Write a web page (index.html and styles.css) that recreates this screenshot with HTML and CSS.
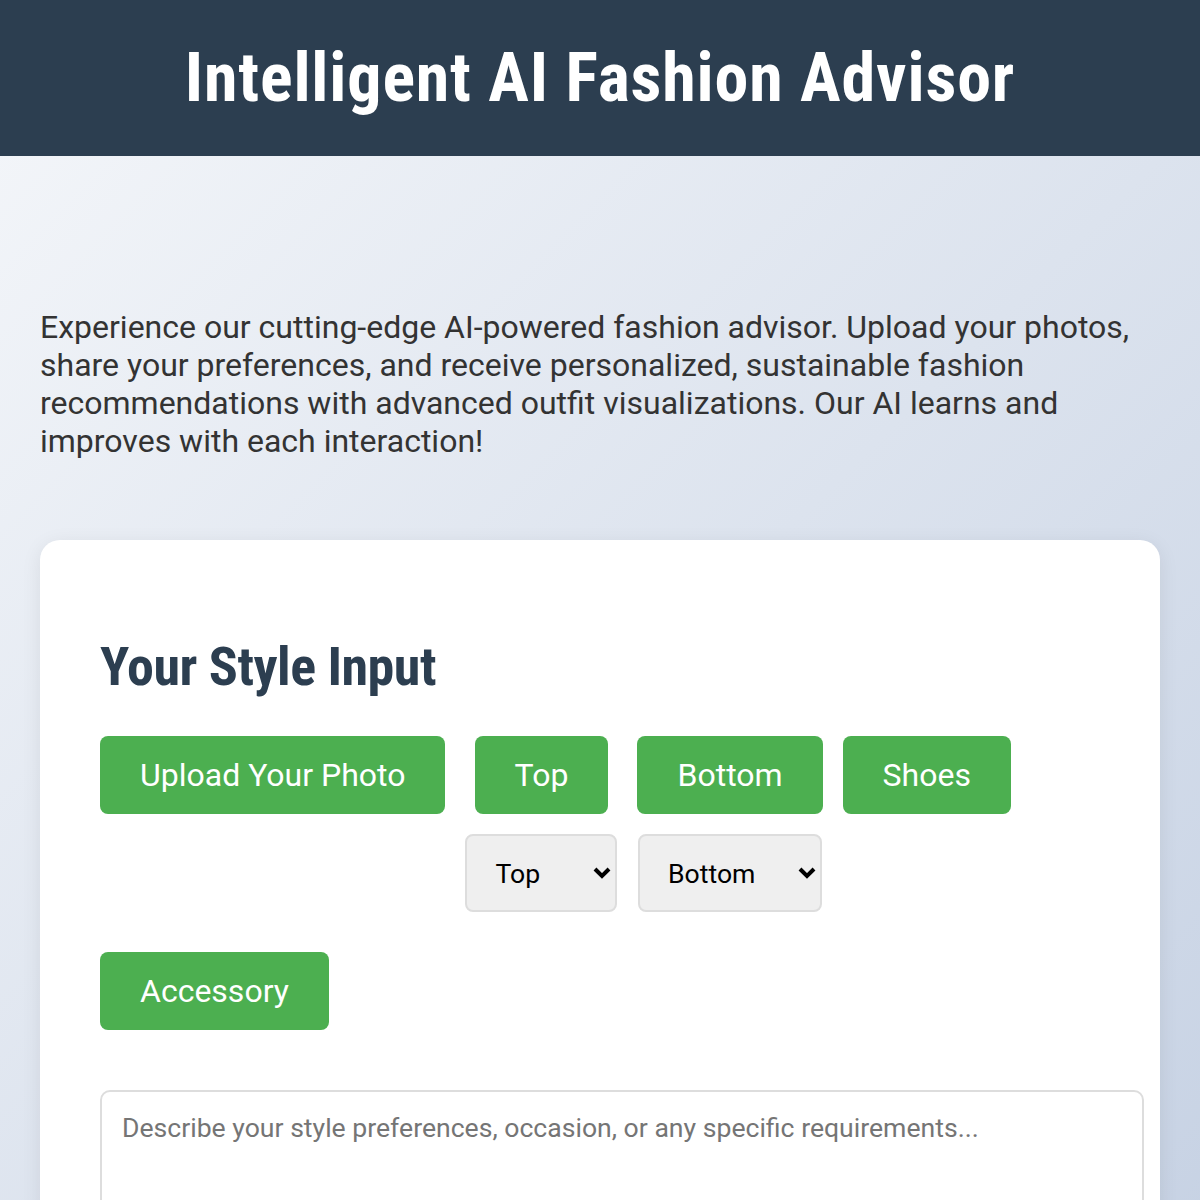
FILE: index.html
```html
<!DOCTYPE html>
<html lang="en">
<head>
    <meta charset="UTF-8">
    <meta name="viewport" content="width=device-width, initial-scale=1.0">
    <title>Intelligent AI Fashion Advisor</title>
    <link rel="stylesheet" href="styles.css">
</head>
<body>

<header class="site-header">
    <h1>Intelligent AI Fashion Advisor</h1>
</header>

<main class="main">
    <p class="intro">Experience our cutting-edge AI-powered fashion advisor. Upload your photos, share your preferences, and receive personalized, sustainable fashion recommendations with advanced outfit visualizations. Our AI learns and improves with each interaction!</p>

    <section class="card">
        <h2>Your Style Input</h2>

        <div class="controls">
            <button class="btn">Upload Your Photo</button>

            <div class="category">
                <button class="btn">Top</button>
                <div class="select-wrap">
                    <select class="picker">
                        <option>Top</option>
                    </select>
                    <svg class="chevron" viewBox="0 0 20 14" width="20" height="14"><path d="M3 3 L10 10 L17 3" fill="none" stroke="#000" stroke-width="4"/></svg>
                </div>
            </div>

            <div class="category">
                <button class="btn">Bottom</button>
                <div class="select-wrap">
                    <select class="picker">
                        <option>Bottom</option>
                    </select>
                    <svg class="chevron" viewBox="0 0 20 14" width="20" height="14"><path d="M3 3 L10 10 L17 3" fill="none" stroke="#000" stroke-width="4"/></svg>
                </div>
            </div>

            <div class="category">
                <button class="btn">Shoes</button>
            </div>

            <div class="category">
                <button class="btn">Accessory</button>
            </div>
        </div>

        <textarea class="prefs" placeholder="Describe your style preferences, occasion, or any specific requirements..."></textarea>
    </section>
</main>

</body>
</html>
```

FILE: styles.css
```css
body {
    font-family: Roboto, "Noto Sans", sans-serif;
    margin: 0;
    padding: 0;
    min-height: 100vh;
    background: linear-gradient(135deg, #f5f7fa 0%, #c3cfe2 100%);
    color: #333;
}
.site-header {
    background-color: #2c3e50;
    height: 156px;
    display: flex;
    align-items: center;
    justify-content: center;
}
.site-header h1 {
    margin: 0;
    color: #fff;
    font-size: 68px;
    font-weight: 700;
    font-stretch: 75%;
    letter-spacing: 0.85px;
}
.main {
    padding: 152px 40px 40px;
}
.intro {
    margin: 0 0 80px;
    font-size: 32px;
    line-height: 38px;
    color: #333;
}
.card {
    background-color: #fff;
    border-radius: 20px;
    padding: 60px;
    box-shadow: 0 4px 20px rgba(0, 0, 0, 0.08);
}
.card h2 {
    margin: 35px 0 38px;
    color: #2c3e50;
    font-size: 54px;
    font-weight: 700;
    font-stretch: 75%;
    letter-spacing: -0.5px;
}
.controls {
    display: flex;
    flex-wrap: wrap;
    align-items: flex-start;
    column-gap: 20px;
    row-gap: 40px;
}
.category {
    display: flex;
    flex-direction: column;
    align-items: center;
    gap: 20px;
}
.btn {
    background-color: #4caf50;
    color: #fff;
    border: none;
    border-radius: 8px;
    height: 78px;
    padding: 0 40px;
    font-family: Roboto, sans-serif;
    font-size: 32px;
    cursor: pointer;
}
.btn:hover {
    background-color: #43a047;
}
.select-wrap {
    position: relative;
}
.picker {
    appearance: none;
    min-width: 152px;
    height: 78px;
    padding: 0 64px 0 28px;
    border: 2px solid #ddd;
    border-radius: 8px;
    background-color: #efefef;
    font-family: Roboto, sans-serif;
    font-size: 26.6px;
    color: #000;
}
.chevron {
    position: absolute;
    right: 5px;
    top: 32px;
    pointer-events: none;
}
.prefs {
    display: block;
    width: 100%;
    height: 200px;
    margin-top: 60px;
    padding: 20px;
    border: 2px solid #ddd;
    border-radius: 10px;
    font-family: Roboto, sans-serif;
    font-size: 26.6px;
    resize: vertical;
}
.prefs::placeholder {
    color: #757575;
}
```
